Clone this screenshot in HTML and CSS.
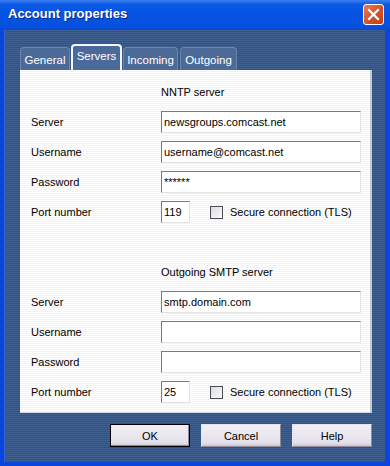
FILE: index.html
```html
<!DOCTYPE html>
<html lang="en">
<head>
    <meta charset="UTF-8">
    <title>Account properties</title>
    <link rel="stylesheet" href="styles.css">
</head>
<body>
    <div class="window">
        <div class="titlebar">
            <span class="title">Account properties</span>
            <span class="close">
                <svg width="13" height="13" viewBox="0 0 13 13">
                    <path d="M2 2 L11 11 M11 2 L2 11" stroke="#fff" stroke-width="2.2" stroke-linecap="square"/>
                </svg>
            </span>
        </div>

        <div class="client">
            <!-- tab strip -->
            <div class="tabs">
                <div class="tab tab-general">General</div>
                <div class="tab tab-servers active">Servers</div>
                <div class="tab tab-incoming">Incoming</div>
                <div class="tab tab-outgoing">Outgoing</div>
            </div>

            <div class="panel">
                <div class="section">
                    <div class="heading">NNTP server</div>
                    <div class="row">
                        <label>Server</label>
                        <div class="field">newsgroups.comcast.net</div>
                    </div>
                    <div class="row">
                        <label>Username</label>
                        <div class="field">username@comcast.net</div>
                    </div>
                    <div class="row">
                        <label>Password</label>
                        <div class="field">******</div>
                    </div>
                    <div class="row">
                        <label>Port number</label>
                        <div class="port-line">
                            <div class="field port">119</div>
                            <span class="check"></span>
                            <span>Secure connection (TLS)</span>
                        </div>
                    </div>
                </div>

                <div class="section second">
                    <div class="heading">Outgoing SMTP server</div>
                    <div class="row">
                        <label>Server</label>
                        <div class="field">smtp.domain.com</div>
                    </div>
                    <div class="row">
                        <label>Username</label>
                        <div class="field"></div>
                    </div>
                    <div class="row">
                        <label>Password</label>
                        <div class="field"></div>
                    </div>
                    <div class="row">
                        <label>Port number</label>
                        <div class="port-line">
                            <div class="field port">25</div>
                            <span class="check"></span>
                            <span>Secure connection (TLS)</span>
                        </div>
                    </div>
                </div>
            </div>

            <div class="buttons">
                <button class="btn btn-default">OK</button>
                <button class="btn">Cancel</button>
                <button class="btn">Help</button>
            </div>
        </div>
    </div>
</body>
</html>
```

FILE: styles.css
```css
body {
    margin: 0;
    font-family: 'Liberation Sans', Arial, sans-serif;
    font-size: 11px;
    background: #ffffff;
}
.window {
    width: 390px;
    height: 466px;
    display: flex;
    flex-direction: column;
    background: #0a46dc;
    box-sizing: border-box;
}
.titlebar {
    height: 30px;
    display: flex;
    align-items: center;
    justify-content: space-between;
    padding: 0 6px 0 8px;
    background: linear-gradient(to bottom, #3d80f0 0%, #0b5ae6 15%, #0553e0 50%, #0651e0 85%, #0a48d6 100%);
}
.title {
    color: #fff;
    font-weight: bold;
    font-size: 13px;
    text-shadow: 1px 1px 0 #0a2a8a;
    margin-top: -4px;
}
.close {
    width: 19px;
    height: 19px;
    margin-top: -2px;
    border: 1px solid #fff;
    border-radius: 3px;
    background: linear-gradient(135deg, #e87a58, #d44d22 60%, #c23d16);
    display: flex;
    align-items: center;
    justify-content: center;
}
.client {
    flex: 1;
    margin: 0 5px 4px 4px;
    padding: 14px 13px 0 15px;
    background: repeating-linear-gradient(to bottom, #40608f 0 1px, #35517d 1px 2px);
    border-left: 1px solid #2f63d6;
}

/* tabs */
.tabs {
    display: flex;
    align-items: flex-end;
    gap: 1px;
    height: 26px;
}
.tab {
    height: 23px;
    box-sizing: border-box;
    padding-top: 6px;
    text-align: center;
    font-size: 11.5px;
    color: #fff;
    background: #4c6a98;
    border: 1px solid #6b85ad;
    border-bottom: none;
    border-radius: 4px 4px 0 0;
}
.tab-general { width: 50px; }
.tab-servers { width: 51px; }
.tab-incoming { width: 55px; }
.tab-outgoing { width: 57px; margin-left: 1px; }
.tab.active {
    height: 26px;
    padding-top: 4px;
    border: 2px solid #f4f6fb;
    border-bottom: none;
    background: #4a6a9c;
}

.panel {
    height: 343px;
    box-sizing: border-box;
    padding: 15px 10px 0 11px;
    background: repeating-linear-gradient(to bottom, #ffffff 0 1px, #f3f3f7 1px 2px);
    border-right: 2px solid #c5c9d4;
    border-bottom: 1px solid #d8dbe3;
}
.section {
    display: flex;
    flex-direction: column;
    gap: 8px;
}
.section.second {
    margin-top: 42px;
}
.heading {
    margin-left: 130px;
    line-height: 14px;
    margin-bottom: 4px;
    color: #000;
}
.row {
    display: grid;
    grid-template-columns: 130px 200px;
    align-items: center;
    height: 22px;
}
.row label {
    color: #000;
}
.field {
    height: 22px;
    box-sizing: border-box;
    line-height: 20px;
    padding-left: 2px;
    background: #fff;
    border: 1px solid #e2e2e2;
    border-top-color: #7a7a7a;
    border-left-color: #7a7a7a;
    color: #000;
}
.port-line {
    display: flex;
    align-items: center;
}
.field.port {
    width: 29px;
}
.check {
    width: 11px;
    height: 11px;
    margin: 0 7px 0 20px;
    border: 1px solid #4a4d55;
    background: linear-gradient(135deg, #dcdce0, #fbfbfb);
}

/* buttons */
.buttons {
    display: flex;
    justify-content: flex-end;
    gap: 11px;
    padding-top: 11px;
}
.btn {
    width: 80px;
    height: 23px;
    font-family: 'Liberation Sans', Arial, sans-serif;
    font-size: 11px;
    color: #000;
    background: linear-gradient(to bottom, #f2f0f5, #e3e0ea 85%, #cbc7d4);
    border: 1px solid #e6e4ec;
    border-right-color: #8e8a9a;
    border-bottom-color: #8e8a9a;
    border-radius: 0;
    padding: 0;
}
.btn-default {
    border: 1px solid #000;
    box-shadow: inset -1px -1px 0 #8e8a9a;
}
```
